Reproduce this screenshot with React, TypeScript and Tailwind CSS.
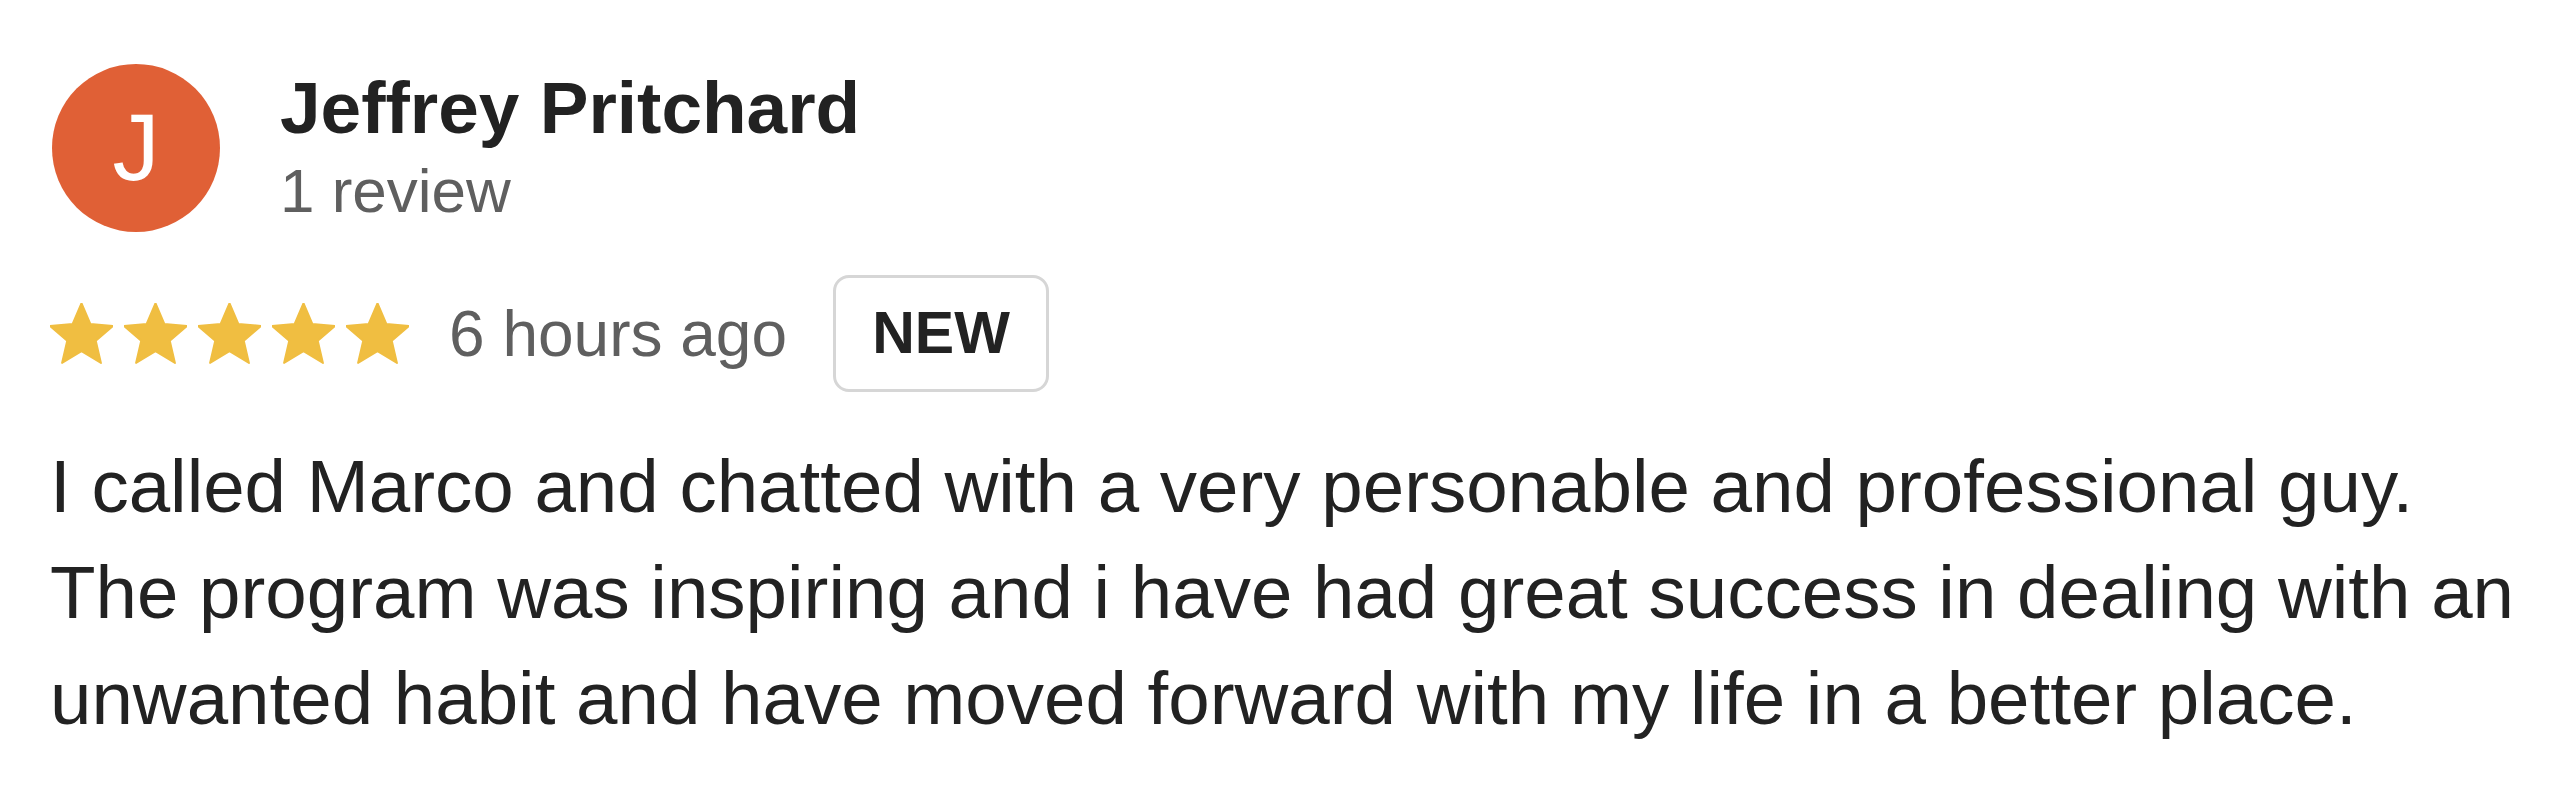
import { Fragment } from 'react';

// Google 식 별 아이콘 (모서리 살짝 둥글게)
const Star = () => (
  <svg width="63" height="61" viewBox="2 2 20 19.3" className="shrink-0">
    <path
      d="M12 17.27L18.18 21l-1.64-7.03L22 9.24l-7.19-.61L12 2 9.19 8.63 2 9.24l5.46 4.73L5.82 21z"
      fill="#F0BE41"
      stroke="#F0BE41"
      strokeWidth="0.6"
      strokeLinejoin="round"
    />
  </svg>
);

const review = {
  name: 'Jeffrey Pritchard',
  initial: 'J',
  count: '1 review',
  rating: 5,
  when: '6 hours ago',
  text: 'I called Marco and chatted with a very personable and professional guy. The program was inspiring and i have had great success in dealing with an unwanted habit and have moved forward with my life in a better place.',
};

export default function App() {
  return (
    <div
      className="min-h-screen bg-white pl-[50px] pt-[64px] text-[#222222]"
      style={{ fontFamily: '"Liberation Sans", Arial, Helvetica, sans-serif' }}
    >
      {/* 작성자 */}
      <div className="flex items-start">
        <div className="ml-[2px] flex h-[168px] w-[168px] shrink-0 items-center justify-center rounded-full bg-[#E06036]">
          <span className="text-[94px] font-light leading-none text-white">{review.initial}</span>
        </div>
        <div className="ml-[60px]">
          <div className="text-[73px] font-bold leading-[88px] text-[#222222]">{review.name}</div>
          <div className="mt-[3px] text-[62px] leading-[72px] text-[#5f5f5f]">{review.count}</div>
        </div>
      </div>

      {/* 별점 / 시간 / NEW */}
      <div className="mt-[43px] flex items-center">
        <div className="flex items-center gap-[11px]">
          {Array.from({ length: review.rating }).map((_, i) => (
            <Fragment key={i}>
              <Star />
            </Fragment>
          ))}
        </div>
        <span className="ml-[40px] text-[64px] leading-none text-[#5f5f5f]">{review.when}</span>
        <div className="ml-[46px] flex h-[117px] w-[216px] items-center justify-center rounded-[16px] border-[3px] border-[#d6d6d6]">
          <span className="text-[59px] font-bold leading-none text-[#222222]">NEW</span>
        </div>
      </div>

      {/* 본문 */}
      <p className="mt-[42px] w-[2480px] text-[74.5px] leading-[106px] text-[#222222]">{review.text}</p>
    </div>
  );
}
